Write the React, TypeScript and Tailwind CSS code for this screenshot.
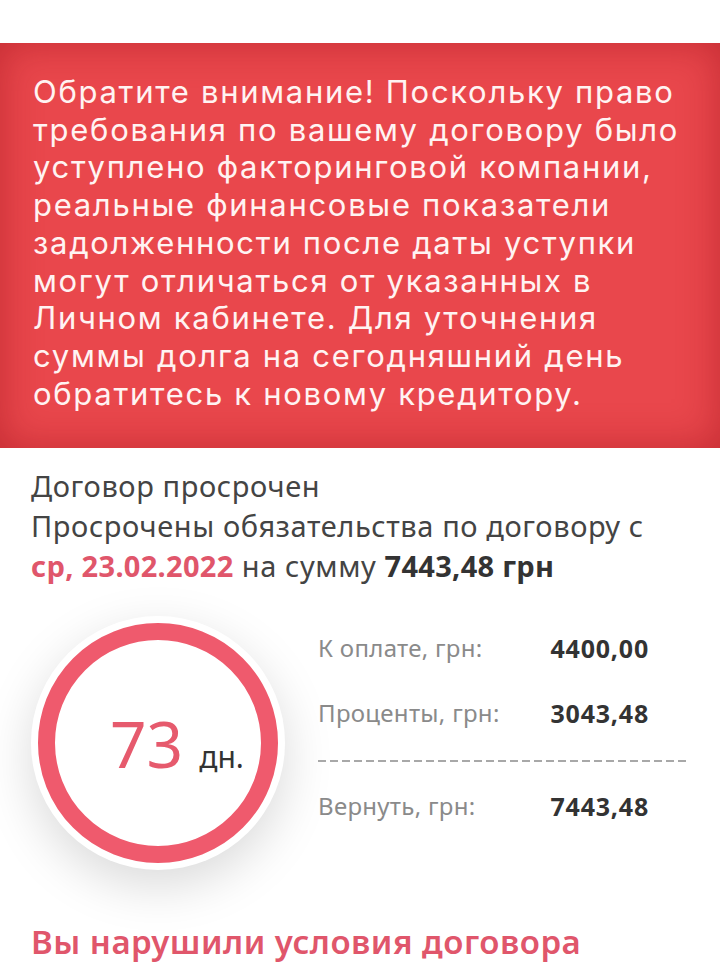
export default function App() {
  const notice = [
    'Обратите внимание! Поскольку право',
    'требования по вашему договору было',
    'уступлено факторинговой компании,',
    'реальные финансовые показатели',
    'задолженности после даты уступки',
    'могут отличаться от указанных в',
    'Личном кабинете. Для уточнения',
    'суммы долга на сегодняшний день',
    'обратитесь к новому кредитору.',
  ]

  const rows = [
    { label: 'К оплате, грн:', value: '4400,00' },
    { label: 'Проценты, грн:', value: '3043,48' },
  ]

  return (
    <div
      className="min-h-[974px] w-[720px] overflow-hidden bg-white"
      style={{ fontFamily: '"Noto Sans", "Open Sans", sans-serif' }}
    >
      {/* Warning banner */}
      <div
        className="mt-[43px] bg-[#e9474c] px-[33px] pt-[30px] pb-[36px] text-[31px] leading-[37.7px] tracking-[1.7px] text-[#fff3f2] shadow-[inset_0_0_40px_rgba(150,10,20,0.45)]"
        style={{ fontFamily: 'Inter, "Noto Sans", sans-serif' }}
      >
        {notice.map((line) => (
          <div key={line} className="whitespace-nowrap">
            {line}
          </div>
        ))}
      </div>

      {/* Status */}
      <div className="px-[31px] pt-[18px] text-[29px] leading-[40px] tracking-[0.6px] text-[#444]">
        <div>Договор просрочен</div>
        <div>Просрочены обязательства по договору с</div>
        <div>
          <span className="font-bold tracking-[0.3px] text-[#e0566b]">ср, 23.02.2022</span> на сумму{' '}
          <span className="font-bold tracking-[0.3px] text-[#333]">7443,48 грн</span>
        </div>
      </div>

      {/* Days counter + amounts */}
      <div className="mt-[30px] flex items-start pl-[31px]">
        <div className="h-[254px] w-[254px] shrink-0 rounded-full bg-white p-[7px] shadow-[0_16px_50px_rgba(0,0,0,0.15)]">
          <div className="flex h-full w-full items-center rounded-full border-[17px] border-[#ef5a6d] pl-[55px]">
            <div className="mt-[2px] flex items-baseline">
              <span className="text-[64px] leading-none text-[#e65a6d]">73</span>
              <span className="ml-[16px] text-[30px] leading-none text-[#333]">дн.</span>
            </div>
          </div>
        </div>

        <div className="ml-[33px] pt-[15px]">
          {rows.map((r, i) => (
            <div
              key={r.label}
              className={`flex h-[34px] w-[331px] items-center justify-between ${i > 0 ? 'mt-[31px]' : ''}`}
            >
              <span className="text-[24px] tracking-[0.3px] text-[#8a8a8a]">{r.label}</span>
              <span className="text-[25px] font-bold tracking-[0.8px] text-[#333]">{r.value}</span>
            </div>
          ))}
          <div className="mt-[30px] h-[2px] w-[372px] bg-[repeating-linear-gradient(90deg,#a8a8a8_0_8px,transparent_8px_12px)]" />
          <div className="mt-[27px] flex h-[34px] w-[331px] items-center justify-between">
            <span className="text-[24px] tracking-[0.3px] text-[#8a8a8a]">Вернуть, грн:</span>
            <span className="text-[25px] font-bold tracking-[0.8px] text-[#333]">7443,48</span>
          </div>
        </div>
      </div>

      <div className="mt-[52px] px-[31px] text-[33px] font-semibold leading-[40px] tracking-[0.5px] text-[#e0566b]">
        Вы нарушили условия договора
      </div>
    </div>
  )
}
